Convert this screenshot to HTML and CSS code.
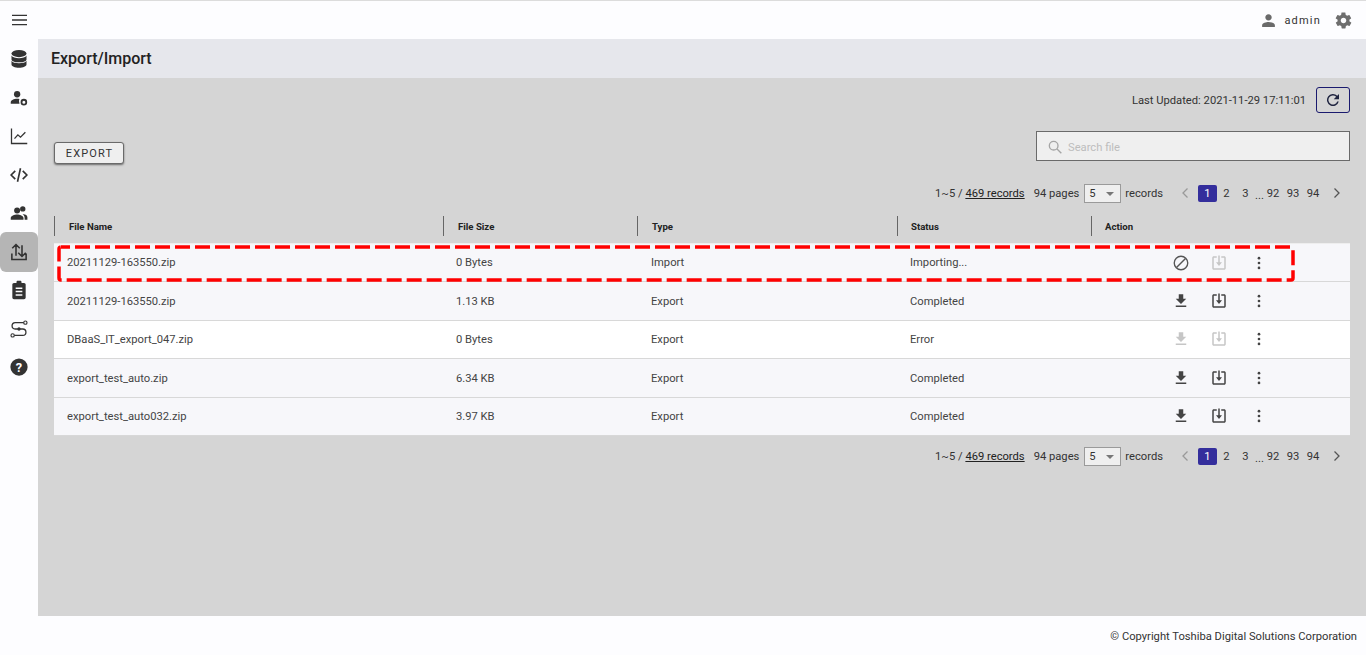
FILE: index.html
```html
<!DOCTYPE html>
<html lang="en">
<head>
<meta charset="utf-8">
<title>Export/Import</title>
<link rel="stylesheet" href="styles.css">
</head>
<body>
<svg class="defs" width="0" height="0">
  <symbol id="i-dl" viewBox="0 0 24 24"><path d="M19 9h-4V3H9v6H5l7 7 7-7zM5 18v2h14v-2H5z"/></symbol>
  <symbol id="i-imp" viewBox="0 0 24 24"><path d="M19 3h-4v2h4v14H5V5h4V3H5c-1.1 0-2 .9-2 2v14c0 1.1.9 2 2 2h14c1.100 0 2-.9 2-2V5c0-1.100-.9-2-2-2z"/><path d="M11 2h2v9h3l-4 5-4-5h3z"/></symbol>
  <symbol id="i-more" viewBox="0 0 24 24"><circle cx="12" cy="5.500" r="1.800"/><circle cx="12" cy="12" r="1.800"/><circle cx="12" cy="18.500" r="1.800"/></symbol>
</svg>
<header class="topbar">
  <svg class="menu" viewBox="0 0 16 12"><path d="M0 1h16M0 6h16M0 11h16"/></svg>
  <div class="user">
    <svg class="user-icon" viewBox="0 0 24 24"><path d="M12 12c2.700 0 4.500-2 4.500-4.500S14.700 3 12 3 7.500 5 7.500 7.500 9.300 12 12 12zm0 2c-3.300 0-9 1.700-9 4.500V21h18v-2.500c0-2.800-5.700-4.500-9-4.500z"/></svg>
    <span class="user-name">admin</span>
    <svg class="gear" viewBox="0 0 24 24"><path d="M19.400 13c0-.3.100-.7.100-1s0-.7-.1-1l2.100-1.600c.2-.2.200-.4.100-.6l-2-3.500c-.1-.2-.4-.3-.6-.2l-2.500 1c-.5-.4-1.100-.7-1.700-1l-.4-2.600c0-.3-.2-.5-.5-.5h-4c-.3 0-.5.200-.5.400l-.4 2.700c-.6.300-1.100.6-1.700 1l-2.500-1c-.2-.100-.5 0-.6.200l-2 3.500c-.1.200-.1.400.1.600L4.600 11c0 .3-.1.700-.1 1s0 .7.100 1l-2.100 1.600c-.2.200-.2.400-.1.600l2 3.500c.1.200.4.300.6.200l2.500-1c.5.400 1.100.7 1.700 1l.4 2.600c0 .3.200.5.500.5h4c.3 0 .5-.2.500-.4l.4-2.700c.6-.3 1.100-.6 1.700-1l2.500 1c.2.100.5 0 .6-.2l2-3.500c.1-.2.100-.4-.1-.6L19.400 13zM12 15.500c-1.900 0-3.500-1.600-3.500-3.500s1.600-3.500 3.500-3.500 3.500 1.600 3.500 3.500-1.600 3.500-3.500 3.500z"/></svg>
  </div>
</header>
<div class="shell">
  <nav class="sidebar">
    <a class="nav-item"><svg class="big" viewBox="0 0 24 24"><ellipse cx="12" cy="5.500" rx="9" ry="4.300"/><path d="M3 7.800c1 2.300 5 3.200 9 3.200s8-.9 9-3.200v4.700c0 2-4 3.400-9 3.400s-9-1.400-9-3.400zM3 14.200c1 2.200 5 3 9 3s8-.8 9-3V18.500c0 2.200-4 4-9 4s-9-1.800-9-4z"/></svg></a>
    <a class="nav-item"><svg viewBox="0 0 24 24"><circle cx="9.500" cy="7" r="4.200"/><path d="M1 19.500v-2c0-2.800 4.500-4.500 8.500-4.500 1 0 2 .1 3 .4a7 7 0 0 0 .2 6.100z"/><circle class="ring" cx="18.500" cy="17.500" r="3.200"/></svg></a>
    <a class="nav-item"><svg class="line" viewBox="0 0 24 24"><path d="M2 2v20h21M6 15.500l4.500-5 3.500 3 6.500-6.500"/></svg></a>
    <a class="nav-item"><svg class="line bold" viewBox="0 0 24 24"><path d="M7 6.500 1.500 12 7 17.500M17 6.500l5.500 5.500-5.500 5.500M14 3l-4 18"/></svg></a>
    <a class="nav-item"><svg viewBox="0 0 24 24"><circle cx="9.500" cy="8.500" r="4"/><circle cx="17" cy="6.500" r="3.600"/><path d="M1 21v-2.500c0-2.800 5-4.500 8.500-4.500s8.500 1.700 8.500 4.500V21zM19.500 21v-2.500c0-2-1-3.600-2.700-4.700 3.200-.4 6.400 1 6.400 3.700v3.500z"/></svg></a>
    <a class="nav-item active"><svg class="line thick" viewBox="0 0 24 24"><path d="M2.500 14v8h19v-8M8 17V2M3 7l5-5 5 5M16 3v15M11 13l5 5 5-5"/></svg></a>
    <a class="nav-item"><svg class="big" viewBox="0 0 24 24"><path fill-rule="evenodd" d="M6 3.500h3V2.500C9 1.700 9.700 1 10.500 1h3c.8 0 1.500.7 1.500 1.500v1h3c1.200 0 2 1 2 2V21c0 1-.8 2-2 2H6c-1.200 0-2-1-2-2V5.500c0-1 .8-2 2-2zM8 9v1.800h8V9zm0 4v1.800h8V13zm0 4v1.800h8V17z"/></svg></a>
    <a class="nav-item"><svg class="line" viewBox="0 0 24 24"><path d="M19 3.500H7a4 4 0 0 0 0 8.500h10a4 4 0 0 1 0 8.500H5"/><circle class="fill" cx="12" cy="12" r="2.200"/><circle class="hollow" cx="20.500" cy="3.500" r="2.200"/><circle class="hollow" cx="3.500" cy="20.500" r="2.200"/></svg></a>
    <a class="nav-item"><svg viewBox="0 0 24 24"><circle cx="12" cy="12" r="11.500"/><text class="help" x="12" y="18" text-anchor="middle">?</text></svg></a>
  </nav>
  <main class="main">
    <h1 class="title">Export/Import</h1>
    <div class="content">
      <div class="updated">
        <span>Last Updated: 2021-11-29 17:11:01</span>
        <button class="refresh" type="button"><svg viewBox="0 0 24 24"><path d="M17.650 6.350A8 8 0 1 0 19.700 14h-2.100a6 6 0 1 1-1.400-6.200L13 11h7V4z"/></svg></button>
      </div>
      <div class="actions">
        <button class="export" type="button">EXPORT</button>
        <label class="search">
          <svg viewBox="0 0 24 24"><circle cx="10" cy="10" r="6.500"/><path d="m15 15 6.500 6.500"/></svg>
          <span>Search file</span>
        </label>
      </div>
      <div class="pager pager-top">
        <span>1~5 / <u>469 records</u></span>
        <span class="pages">94 pages</span>
        <span class="select">5<i class="caret"></i></span>
        <span>records</span>
        <svg class="chev prev" viewBox="0 0 10 12"><path d="M7.500 1.500 3 6l4.500 4.500"/></svg>
        <b class="page current">1</b><span class="page">2</span><span class="page">3</span><span class="dots">...</span><span class="page wide">92</span><span class="page wide">93</span><span class="page wide">94</span>
        <svg class="chev next" viewBox="0 0 10 12"><path d="M2.500 1.500 7 6l-4.500 4.500"/></svg>
      </div>
      <div class="table">
        <div class="row head">
          <div class="cell">File Name</div><div class="cell">File Size</div><div class="cell">Type</div><div class="cell">Status</div><div class="cell">Action</div>
        </div>
        <div class="row body tint first">
          <div class="cell">20211129-163550.zip</div><div class="cell">0 Bytes</div><div class="cell">Import</div><div class="cell">Importing...</div>
          <div class="cell ops">
            <svg class="op" viewBox="0 0 24 24"><circle class="cancel" cx="12" cy="12" r="9"/><path class="cancel" d="m6 18 12-12"/></svg>
            <svg class="op off"><use href="#i-imp"/></svg>
            <svg class="op"><use href="#i-more"/></svg>
          </div>
          <svg class="mark" viewBox="0 0 1240 38" preserveAspectRatio="none"><rect x="3" y="3" width="1234" height="33" rx="2"/></svg>
        </div>
        <div class="row body">
          <div class="cell">20211129-163550.zip</div><div class="cell">1.13 KB</div><div class="cell">Export</div><div class="cell">Completed</div>
          <div class="cell ops"><svg class="op"><use href="#i-dl"/></svg><svg class="op"><use href="#i-imp"/></svg><svg class="op"><use href="#i-more"/></svg></div>
        </div>
        <div class="row body plain">
          <div class="cell">DBaaS_IT_export_047.zip</div><div class="cell">0 Bytes</div><div class="cell">Export</div><div class="cell">Error</div>
          <div class="cell ops"><svg class="op off"><use href="#i-dl"/></svg><svg class="op off"><use href="#i-imp"/></svg><svg class="op"><use href="#i-more"/></svg></div>
        </div>
        <div class="row body">
          <div class="cell">export_test_auto.zip</div><div class="cell">6.34 KB</div><div class="cell">Export</div><div class="cell">Completed</div>
          <div class="cell ops"><svg class="op"><use href="#i-dl"/></svg><svg class="op"><use href="#i-imp"/></svg><svg class="op"><use href="#i-more"/></svg></div>
        </div>
        <div class="row body">
          <div class="cell">export_test_auto032.zip</div><div class="cell">3.97 KB</div><div class="cell">Export</div><div class="cell">Completed</div>
          <div class="cell ops"><svg class="op"><use href="#i-dl"/></svg><svg class="op"><use href="#i-imp"/></svg><svg class="op"><use href="#i-more"/></svg></div>
        </div>
      </div>
      <div class="pager pager-bottom">
        <span>1~5 / <u>469 records</u></span>
        <span class="pages">94 pages</span>
        <span class="select">5<i class="caret"></i></span>
        <span>records</span>
        <svg class="chev prev" viewBox="0 0 10 12"><path d="M7.500 1.500 3 6l4.500 4.500"/></svg>
        <b class="page current">1</b><span class="page">2</span><span class="page">3</span><span class="dots">...</span><span class="page wide">92</span><span class="page wide">93</span><span class="page wide">94</span>
        <svg class="chev next" viewBox="0 0 10 12"><path d="M2.500 1.500 7 6l-4.500 4.500"/></svg>
      </div>
    </div>
  </main>
</div>
<footer class="footer">© Copyright Toshiba Digital Solutions Corporation</footer>
</body>
</html>
```
FILE: styles.css
```css
* { box-sizing: border-box; }
html, body { margin: 0; height: 100%; }
body {
  display: flex; flex-direction: column; height: 655px; overflow: hidden;
  font-family: Roboto, "Liberation Sans", sans-serif; font-size: 11.2px; color: #333;
  background: #fdfdff;
}
.defs { position: absolute; }
.topbar {
  flex: 0 0 39px; display: flex; align-items: center; justify-content: space-between;
  padding: 0 13px 0 12px; border-top: 1px solid #dcdcdc; background: #fdfdff;
}
.menu { width: 15px; height: 12px; fill: none; stroke: #333; stroke-width: 1.400; }
.user { display: flex; align-items: center; }
.user-icon { width: 17px; height: 17px; fill: #6a6a6a; }
.user-name { margin-left: 7px; font-size: 11px; letter-spacing: 1.200px; color: #333; }
.gear { width: 19px; height: 19px; margin-left: 13px; fill: #6e6e6e; }
.shell { flex: 1; display: flex; min-height: 0; }
.sidebar { flex: 0 0 38px; display: flex; flex-direction: column; padding-top: 1px; background: #fdfdff; }
.nav-item { height: 38.500px; flex: none; display: flex; align-items: center; justify-content: center; }
.nav-item svg { width: 18px; height: 18px; fill: #333; }
.nav-item svg.big { width: 20px; height: 20px; }
.nav-item.active { height: 39.500px; margin: -.5px 0 -.5px; background: #b5b5b5; border-radius: 6px; }
.nav-item .line { fill: none; stroke: #333; stroke-width: 1.700; }
.nav-item .line.bold { stroke-width: 2.200; }
.nav-item .line.thick { stroke-width: 2.100; }
.nav-item .fill { fill: #333; stroke: none; }
.nav-item .hollow { fill: #fdfdff; stroke-width: 1.500; }
.nav-item .ring { fill: #fdfdff; stroke: #333; stroke-width: 2.400; }
.help { font-family: Roboto, sans-serif; font-size: 17px; font-weight: 700; fill: #fdfdff; }
.main { flex: 1; display: flex; flex-direction: column; min-width: 0; }
.title {
  flex: 0 0 39px; margin: 0; padding: 0 0 0 13px; display: flex; align-items: center;
  font-size: 16px; font-weight: 500; color: #222; background: #e6e7ec;
}
.content { flex: 1; padding: 9px 16px 0; background: #d5d5d5; }
.updated { display: flex; align-items: center; justify-content: flex-end; height: 26px; }
.refresh {
  width: 34px; height: 26px; margin-left: 10px; padding: 0; display: flex; align-items: center; justify-content: center;
  background: transparent; border: 1px solid #1a1a6e; border-radius: 3px;
}
.refresh svg { width: 18px; height: 18px; fill: #1f2440; }
.actions { display: flex; justify-content: space-between; align-items: flex-start; margin-top: 18px; }
.export {
  width: 70px; height: 22px; margin-top: 11px; padding: 0 0 0 1px; font: 400 11px Roboto, sans-serif; letter-spacing: 1.150px; color: #333;
  background: #efefef; border: 1px solid #6a6a6a; border-radius: 3px; box-shadow: 0 1px 2px rgba(0,0,0,.5);
}
.search {
  width: 314px; height: 30px; display: flex; align-items: center; padding: 2px 0 0 10px;
  color: #bdbdbd; background: #efefef; border: 1px solid #6a6a6a;
}
.search svg { width: 16px; height: 16px; margin-right: 5px; fill: none; stroke: #a5a5a5; stroke-width: 2; }
.pager { display: flex; align-items: center; justify-content: flex-end; height: 18px; padding-right: 8px; }
.pager-top { margin-top: 20px; }
.pager-bottom { margin-top: 11px; }
.pager u { color: #222; }
.pages { margin-left: 9px; }
.select {
  position: relative; width: 37px; height: 19px; margin: 0 4px 0 5px; padding-left: 4px; line-height: 17px;
  background: #efefef; border: 1px solid #9a9a9a;
}
.caret {
  position: absolute; right: 6px; top: 7px; width: 0; height: 0;
  border-left: 4px solid transparent; border-right: 4px solid transparent; border-top: 4px solid #777;
}
.chev { width: 10px; height: 12px; fill: none; stroke: #555; stroke-width: 1.300; }
.chev.prev { margin: 0 8px 0 17px; stroke: #999; }
.chev.next { margin-left: 9px; }
.page { width: 19px; height: 17px; display: flex; align-items: center; justify-content: center; font-weight: 400; }
.page.wide { width: 20px; }
.page.current { color: #fff; background: #342e9c; border-radius: 2px; }
.dots { width: 6px; margin-top: 6px; margin-right: 2px; text-align: center; line-height: 1; }
.table { margin-top: 14px; }
.row { position: relative; display: grid; grid-template-columns: 389px 194px 260px 194px 1fr; align-items: center; }
.head { height: 20px; margin-bottom: 7px; font-weight: 700; font-size: 9.600px; color: #222; }
.head .cell { height: 100%; display: flex; align-items: center; padding-left: 14px; border-left: 1px solid #666; }
.head .cell:nth-child(n+4) { padding-left: 13px; }
.body { height: 38.500px; background: #f7f7fa; border-bottom: 1px solid #d8d8d8; }
.body.plain { background: #fff; }
.body .cell { padding: 1px 0 0 13px; color: #444; }
.body .cell:nth-child(3) { padding-left: 14px; }
.body.first .cell { padding-top: 0; }
.body.first { border-top: 1px solid #eee; height: 39px; }
.ops { display: flex; align-items: center; padding-left: 0; }
.body .cell.ops { padding: 0 0 0 81px; }
.op { width: 18px; height: 18px; margin-right: 20px; fill: #444; flex: none; }
.op:nth-child(2) { margin-right: 22px; }
.op:last-child { margin-right: 0; }
.op.off { fill: #c6c6c6; }
.cancel { fill: none; stroke: #555; stroke-width: 1.800; }
.mark { position: absolute; left: 2px; top: 0; width: 1240px; height: 38px; fill: none; stroke: #f00; stroke-width: 3.500; stroke-dasharray: 15 5; stroke-dashoffset: 6; pointer-events: none; }
.footer { flex: 0 0 39px; display: flex; align-items: center; justify-content: flex-end; padding: 1px 9px 0 0; color: #333; background: #fdfdff; }
```
